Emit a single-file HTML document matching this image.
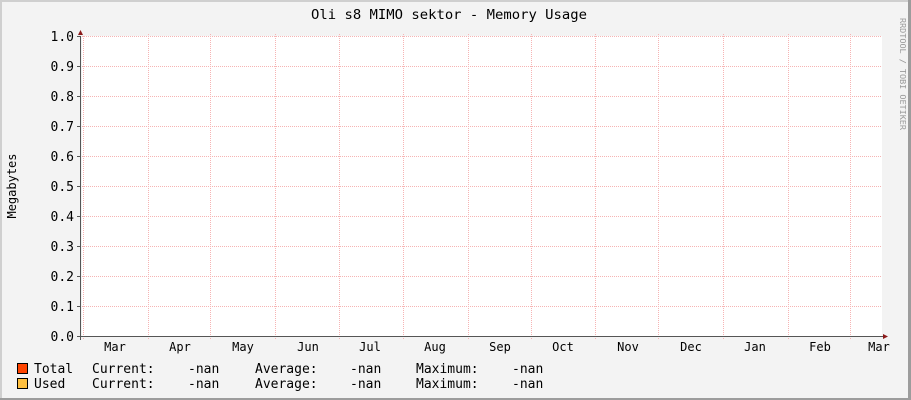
<!DOCTYPE html>
<html><head><meta charset="utf-8"><style>
html,body{margin:0;padding:0;width:911px;height:400px;overflow:hidden;background:#f3f3f3}
svg text{font-family:"DejaVu Sans Mono","Liberation Mono",monospace;fill:#000}
</style></head><body>
<svg width="911" height="400" xmlns="http://www.w3.org/2000/svg">
<rect x="0" y="0" width="911" height="400" fill="#f3f3f3"/>
<rect x="0" y="0" width="911" height="2" fill="#cfcfcf"/>
<rect x="0" y="0" width="2" height="400" fill="#cfcfcf"/>
<rect x="908" y="0" width="3" height="400" fill="#9c9c9c"/>
<rect x="0" y="398" width="911" height="2" fill="#9c9c9c"/>
<rect x="82" y="36" width="800" height="300" fill="#fff"/>
<g stroke="#f6b4b4" stroke-width="1" stroke-dasharray="1,1" shape-rendering="crispEdges">
<line x1="82" y1="36.5" x2="882" y2="36.5"/><line x1="82" y1="66.5" x2="882" y2="66.5"/>
<line x1="82" y1="96.5" x2="882" y2="96.5"/><line x1="82" y1="126.5" x2="882" y2="126.5"/>
<line x1="82" y1="156.5" x2="882" y2="156.5"/><line x1="82" y1="186.5" x2="882" y2="186.5"/>
<line x1="82" y1="216.5" x2="882" y2="216.5"/><line x1="82" y1="246.5" x2="882" y2="246.5"/>
<line x1="82" y1="276.5" x2="882" y2="276.5"/><line x1="82" y1="306.5" x2="882" y2="306.5"/>
<line x1="148.5" y1="34" x2="148.5" y2="339"/><line x1="210.5" y1="34" x2="210.5" y2="339"/>
<line x1="275.5" y1="34" x2="275.5" y2="339"/><line x1="339.5" y1="34" x2="339.5" y2="339"/>
<line x1="403.5" y1="34" x2="403.5" y2="339"/><line x1="468.5" y1="34" x2="468.5" y2="339"/>
<line x1="531.5" y1="34" x2="531.5" y2="339"/><line x1="595.5" y1="34" x2="595.5" y2="339"/>
<line x1="658.5" y1="34" x2="658.5" y2="339"/><line x1="723.5" y1="34" x2="723.5" y2="339"/>
<line x1="788.5" y1="34" x2="788.5" y2="339"/><line x1="850.5" y1="34" x2="850.5" y2="339"/>
<line x1="83.5" y1="36" x2="83.5" y2="339"/>
</g>
<g stroke="#555" shape-rendering="crispEdges">
<line x1="80.5" y1="36" x2="80.5" y2="340"/>
<line x1="77" y1="336.5" x2="884" y2="336.5"/>
<line x1="77" y1="36.5" x2="80" y2="36.5"/><line x1="77" y1="66.5" x2="80" y2="66.5"/>
<line x1="77" y1="96.5" x2="80" y2="96.5"/><line x1="77" y1="126.5" x2="80" y2="126.5"/>
<line x1="77" y1="156.5" x2="80" y2="156.5"/><line x1="77" y1="186.5" x2="80" y2="186.5"/>
<line x1="77" y1="216.5" x2="80" y2="216.5"/><line x1="77" y1="246.5" x2="80" y2="246.5"/>
<line x1="77" y1="276.5" x2="80" y2="276.5"/><line x1="77" y1="306.5" x2="80" y2="306.5"/>
</g>
<polygon points="78,35 83,35 80.5,30" fill="#8b1a1a"/>
<polygon points="883,334 883,339 888,336.5" fill="#8b1a1a"/>
<text x="449" y="19" font-size="13" text-anchor="middle" textLength="276" lengthAdjust="spacingAndGlyphs">Oli s8 MIMO sektor - Memory Usage</text>
<g font-size="13" text-anchor="end">
<text x="74" y="41">1.0</text><text x="74" y="71">0.9</text><text x="74" y="101">0.8</text>
<text x="74" y="131">0.7</text><text x="74" y="161">0.6</text><text x="74" y="191">0.5</text>
<text x="74" y="221">0.4</text><text x="74" y="251">0.3</text><text x="74" y="281">0.2</text>
<text x="74" y="311">0.1</text><text x="74" y="341">0.0</text>
</g>
<text transform="translate(16,186) rotate(-90)" font-size="12" text-anchor="middle">Megabytes</text>
<g font-size="12" text-anchor="middle">
<text x="115" y="351">Mar</text><text x="180" y="351">Apr</text><text x="243" y="351">May</text>
<text x="308" y="351">Jun</text><text x="370" y="351">Jul</text><text x="435" y="351">Aug</text>
<text x="500" y="351">Sep</text><text x="563" y="351">Oct</text><text x="628" y="351">Nov</text>
<text x="691" y="351">Dec</text><text x="755" y="351">Jan</text><text x="820" y="351">Feb</text>
<text x="879" y="351">Mar</text>
</g>
<text transform="translate(900,18) rotate(90)" font-size="8" style="fill:#999" textLength="112" lengthAdjust="spacingAndGlyphs">RRDTOOL / TOBI OETIKER</text>
<rect x="17.5" y="363.5" width="10" height="10" fill="#ff4400" stroke="#000"/>
<rect x="17.5" y="378.5" width="10" height="10" fill="#ffc040" stroke="#000"/>
<g font-size="13">
<text x="34" y="373">Total</text><text x="92" y="373">Current:</text><text x="188" y="373">-nan</text>
<text x="255" y="373">Average:</text><text x="350" y="373">-nan</text><text x="416" y="373">Maximum:</text><text x="512" y="373">-nan</text>
<text x="34" y="388">Used</text><text x="92" y="388">Current:</text><text x="188" y="388">-nan</text>
<text x="255" y="388">Average:</text><text x="350" y="388">-nan</text><text x="416" y="388">Maximum:</text><text x="512" y="388">-nan</text>
</g>
</svg>
</body></html>
